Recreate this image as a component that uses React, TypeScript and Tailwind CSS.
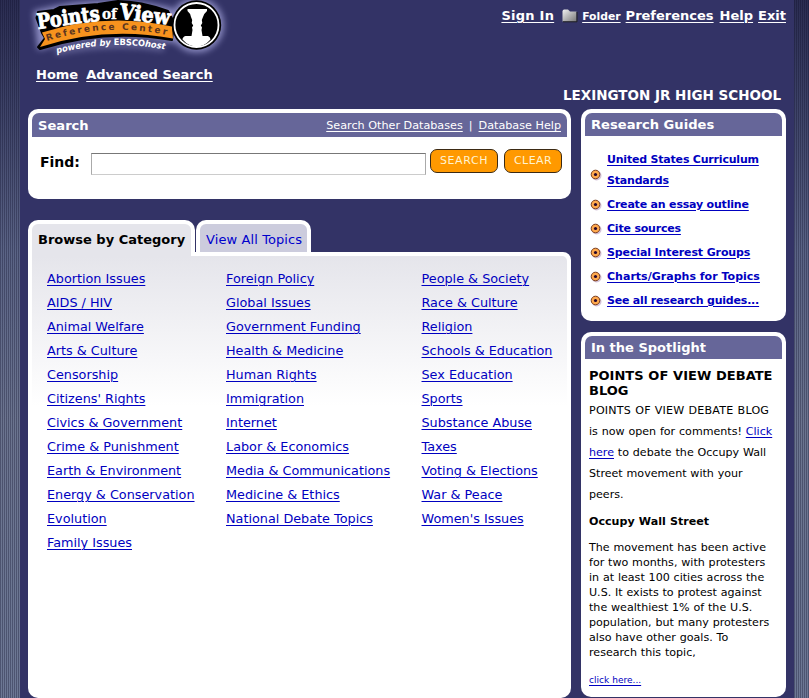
import React from "react";

const columns: string[][] = [
  ["Abortion Issues", "AIDS / HIV", "Animal Welfare", "Arts & Culture", "Censorship", "Citizens' Rights", "Civics & Government", "Crime & Punishment", "Earth & Environment", "Energy & Conservation", "Evolution", "Family Issues"],
  ["Foreign Policy", "Global Issues", "Government Funding", "Health & Medicine", "Human Rights", "Immigration", "Internet", "Labor & Economics", "Media & Communications", "Medicine & Ethics", "National Debate Topics"],
  ["People & Society", "Race & Culture", "Religion", "Schools & Education", "Sex Education", "Sports", "Substance Abuse", "Taxes", "Voting & Elections", "War & Peace", "Women's Issues"],
];

const guides: [string, string][] = [
  ["Create an essay outline", "tracking-[-0.19px]"],
  ["Cite sources", "tracking-[-0.2px]"],
  ["Special Interest Groups", "tracking-[-0.12px]"],
  ["Charts/Graphs for Topics", "tracking-[0.02px]"],
  ["See all research guides...", "tracking-[-0.2px]"],
];

function Logo() {
  return (
    <svg className="block" width="210" height="60" viewBox="25 0 210 60">
      <defs>
        <filter id="glow" x="-20%" y="-40%" width="140%" height="180%"><feGaussianBlur stdDeviation="3" /></filter>
        <path id="bannerArc" d="M47 41 Q106 22 167 35" />
        <path id="poweredArc" d="M57 53.500 Q110 39 165 49.500" />
      </defs>
      <g filter="url(#glow)" fill="#a9a9e0" stroke="#a9a9e0" strokeWidth="5" opacity="0.75">
        <path d="M36 13 Q105 -6 170 10 L172 40 Q110 25 40 47 Z" />
        <circle cx="196.500" cy="25" r="25" />
        <path d="M56 52 Q110 40 164 48" fill="none" strokeWidth="6" opacity="0.6" />
      </g>
      <path d="M38 12 L36.500 18 L42 33 L45 38 L38 47 L40 49 Q106 28 172 40 L174 22 L168 11 Q140 1 118 1 L98 4 L60 7 L54 10Z" fill="#000" stroke="#000" strokeWidth="2" strokeLinejoin="round" />
      <path d="M42 32.500 Q107 12 172 26.500 L173 38.500 Q105 26 40 47 L45 39Z" fill="#f7931e" />
      <g fontFamily="DejaVu Serif, serif" fontWeight="bold" fill="#fff" stroke="#fff" strokeWidth="0.900">
        <text fontSize="21" textLength="63" lengthAdjust="spacingAndGlyphs" transform="rotate(-8 38 29)" x="38" y="29">Points</text>
        <text fontSize="15" textLength="15" lengthAdjust="spacingAndGlyphs" x="102" y="18.500" strokeWidth="0.300">of</text>
        <text fontSize="21" textLength="51" lengthAdjust="spacingAndGlyphs" transform="rotate(7 119 18.500)" x="119" y="18.500">View</text>
      </g>
      <text fontFamily="DejaVu Sans, sans-serif" fontWeight="bold" fontSize="9" fill="#5b3520"><textPath href="#bannerArc" textLength="121" lengthAdjust="spacing">Reference Center</textPath></text>
      <text fontFamily="DejaVu Sans, sans-serif" fontWeight="bold" fontSize="8.800" fill="#fff"><textPath href="#poweredArc" textLength="109" lengthAdjust="spacingAndGlyphs"><tspan fontStyle="italic">powered by </tspan>EBSCO<tspan fontStyle="italic">host</tspan></textPath></text>
      <circle cx="196.500" cy="25" r="24.700" fill="#000" />
      <circle cx="196.500" cy="25" r="22" fill="#000" stroke="#fff" strokeWidth="1.800" />
      <path d="M187.500 9 H207 V11 Q203.500 14 203 17 L201.800 20 L202.300 23 L200.800 25.500 L202 27.500 L201.500 30 L202.500 36 H208 Q210.500 37 210.500 39.500 Q204.500 46.500 196.800 46.500 Q188.500 46.500 182.500 39.500 Q182.500 37 185.500 36 H191.500 L192.500 30 L192 27.500 L193.200 25.500 L191.700 23 L192.200 20 L191 17 Q191 14 187.500 11Z" fill="#fff" />
    </svg>
  );
}

function FolderIcon() {
  return (
    <svg className="mt-[9px] ml-[8px] block" width="16" height="14" viewBox="0 0 16 14">
      <defs><linearGradient id="folder" x1="0" y1="0" x2="1" y2="1"><stop offset="0" stopColor="#f2f2f2" /><stop offset="1" stopColor="#777" /></linearGradient></defs>
      <path d="M.5 2 Q1 .5 2 .5 H6 L8 2.500 H14.500 V12.500 H.5Z" fill="url(#folder)" />
      <path d="M1 12.800 H15 V3" fill="none" stroke="#222" />
    </svg>
  );
}

function Bullet() {
  return (
    <svg className="mr-[5px] block shrink-0" width="12" height="12" viewBox="0 0 12 12">
      <circle cx="6.500" cy="6.500" r="5" fill="#d3c3d8" />
      <circle cx="5.500" cy="5.500" r="4.300" fill="#ffa94d" stroke="#7a3d1d" strokeWidth="1" />
      <circle cx="5.500" cy="5.500" r="1.600" fill="#26052b" />
    </svg>
  );
}

function Stripes({ side }: { side: "left" | "right" }) {
  return (
    <div className={(side === "left" ? "w-[20px]" : "w-[15px]") + " h-full shrink-0 bg-[repeating-linear-gradient(90deg,rgba(12,12,40,0.32)_0px,rgba(12,12,40,0.32)_1px,transparent_1px,transparent_2px),linear-gradient(#2b2d52_0px,#3c4166_100px,#5a6385_250px,#6b748f_420px,#6c7794_698px)]"} />
  );
}

const link = "cursor-pointer underline decoration-1 underline-offset-[1.5px]";
const blue = "text-[#0000c0]";

export default function App() {
  return (
    <div className="flex h-[698px] w-[809px] overflow-hidden bg-[#333366] font-['DejaVu_Sans',sans-serif] text-[12.8px] text-black">
      <Stripes side="left" />
      <div className="flex h-full w-[774px] flex-col">
        <header className="flex h-[60px] justify-between">
          <div className="ml-[5px]"><Logo /></div>
          <nav className="flex pr-[8px] text-[13px] leading-[32px] font-bold whitespace-nowrap text-white">
            <a className={`${link} tracking-[0.25px]`}>Sign In</a>
            <FolderIcon />
            <a className={`${link} ml-[4px] text-[10.8px] leading-[33px]`}>Folder</a>
            <a className={`${link} ml-[5px]`}>Preferences</a>
            <a className={`${link} ml-[6px]`}>Help</a>
            <a className={`${link} ml-[5px]`}>Exit</a>
          </nav>
        </header>
        <div className="flex h-[25px] gap-[8px] pl-[16px] text-[13px] leading-[30px] font-bold text-white">
          <a className={link}>Home</a><a className={link}>Advanced Search</a>
        </div>
        <div className="h-[24px] pr-[13px] text-right text-[13.5px] leading-[21px] font-bold text-white">LEXINGTON JR HIGH SCHOOL</div>

        <div className="flex h-[589px] gap-[10px] pl-[8px]">
          <main className="flex w-[543px] flex-col">
            <section className="h-[90px] shrink-0 rounded-[10px] bg-white p-[4px]">
              <div className="flex h-[24px] justify-between rounded-t-[7px] bg-[#666699] px-[6px] leading-[25px] text-white">
                <h2 className="text-[13.1px] font-bold">Search</h2>
                <div className="text-[11.2px] whitespace-nowrap"><a className={link}>Search Other Databases</a><span className="mx-[6px]">|</span><a className={link}>Database Help</a></div>
              </div>
              <div className="flex pt-[12px] pl-[8px]">
                <label className="w-[51px] text-[14px] leading-[26px] font-bold">Find:</label>
                <input className="mt-[4px] h-[22px] w-[335px] border border-t-[#777] border-r-[#aaa] border-b-[#ccc] border-l-[#aaa] bg-white" />
                <button className="ml-[4px] h-[24px] w-[68px] rounded-[7px] border border-[#3b2a14] bg-[#ff9900] text-[11px] tracking-[0.6px] text-[#fff3d0]">SEARCH</button>
                <button className="ml-[6px] h-[24px] w-[58px] rounded-[7px] border border-[#3b2a14] bg-[#ff9900] text-[11px] tracking-[0.4px] text-[#fff3d0]">CLEAR</button>
              </div>
            </section>

            <div className="z-10 mt-[21px] flex h-[36px] shrink-0">
              <div className="w-[167px] rounded-t-[10px] border-x-4 border-t-4 border-white bg-[#e5e5eb] pl-[6px] text-[13px] leading-[31px] font-bold whitespace-nowrap">Browse by Category</div>
              <div className="ml-px h-[32px] w-[115px] rounded-t-[10px] border-x-4 border-t-4 border-white bg-[#ccccdd] pl-[6px] text-[13px] leading-[31px] tracking-[0.1px] whitespace-nowrap text-[#0000cc]">View All Topics</div>
            </div>
            <section className="-mt-[4px] h-[446px] shrink-0 rounded-tr-[8px] rounded-b-[10px] bg-white px-[4px] pt-[4px]">
              <div className={`${blue} flex h-[438px] rounded-tr-[5px] bg-[linear-gradient(#e5e5eb_0px,#ffffff_150px)] pt-[11px] pl-[15px] leading-[24px] whitespace-nowrap`}>
                {columns.map((col, i) => (
                  <ul key={i} className={i === 0 ? "w-[179px] shrink-0" : i === 1 ? "w-[195.5px] shrink-0" : "shrink-0"}>
                    {col.map((t) => <li key={t}><a className={link}>{t}</a></li>)}
                  </ul>
                ))}
              </div>
            </section>
          </main>

          <aside className="flex w-[205px] flex-col">
            <section className="h-[212px] shrink-0 rounded-[10px] bg-white p-[4px]">
              <h2 className="h-[23px] rounded-t-[7px] bg-[#666699] pl-[6px] text-[13.1px] leading-[23px] font-bold text-white">Research Guides</h2>
              <ul className={`${blue} pt-[13px] pl-[5px] text-[11px] font-bold`}>
                <li className="flex h-[44px]"><span className="pt-[20px]"><Bullet /></span><a className={`${link} leading-[21px] tracking-[-0.2px]`}>United States Curriculum<br />Standards</a></li>
                {guides.map(([t, spacing]) => <li key={t} className="flex h-[24px] items-center"><Bullet /><a className={`${link} ${spacing} whitespace-nowrap`}>{t}</a></li>)}
              </ul>
            </section>
            <section className="mt-[11px] h-[365px] shrink-0 rounded-[10px] bg-white p-[4px]">
              <h2 className="h-[23px] rounded-t-[7px] bg-[#666699] pl-[6px] text-[13px] leading-[23px] font-bold text-white">In the Spotlight</h2>
              <div className="pl-[4px] text-[11.1px] [word-spacing:0.3px] whitespace-nowrap">
                <h3 className="pt-[9px] text-[13px] leading-[15px] font-bold">POINTS OF VIEW DEBATE<br />BLOG</h3>
                <p className="mt-[2px] leading-[21px]"><span className="tracking-[0.22px]">POINTS OF VIEW DEBATE BLOG</span><br />is now open for comments! <a className={`${link} ${blue}`}>Click</a><br /><a className={`${link} ${blue}`}>here</a> to debate the Occupy Wall<br />Street movement with your<br />peers.</p>
                <h4 className="mt-[9px] leading-[15px] font-bold">Occupy Wall Street</h4>
                <p className="mt-[11px] leading-[15px]">The movement has been active<br />for two months, with protesters<br />in at least 100 cities across the<br />U.S. It exists to protest against<br />the wealthiest 1% of the U.S.<br />population, but many protesters<br />also have other goals. To<br />research this topic,</p>
                <a className={`${link} ${blue} mt-[13px] block text-[9px] leading-[15px]`}>click here...</a>
              </div>
            </section>
          </aside>
        </div>
      </div>
      <Stripes side="right" />
    </div>
  );
}
